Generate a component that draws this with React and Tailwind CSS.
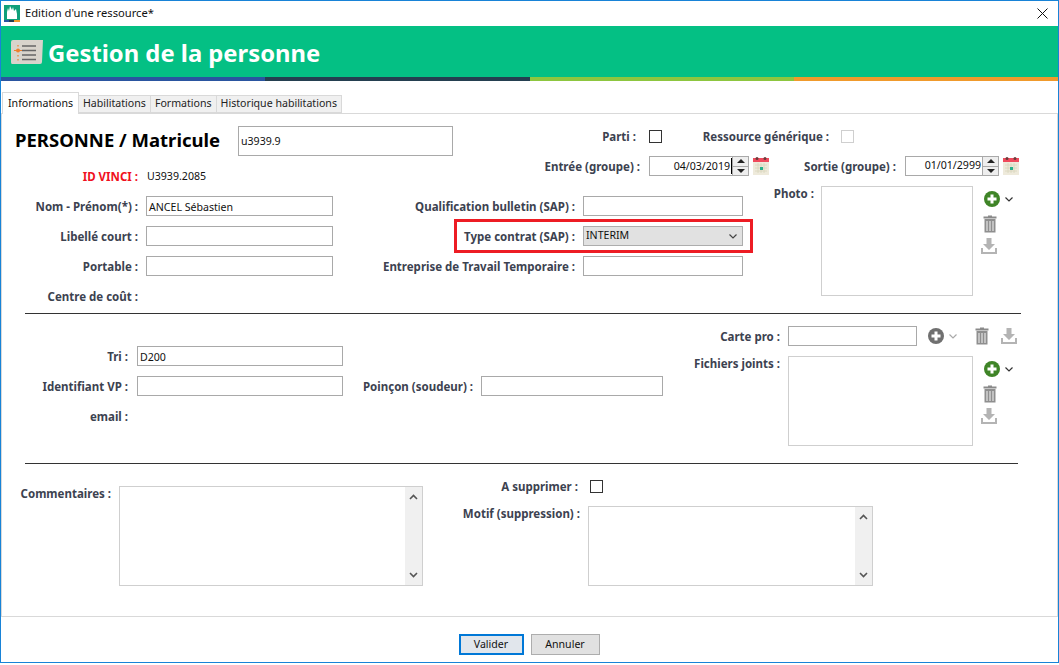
import React from 'react';

const PlusIcon = ({ color = '#3f8427' }) => (
  <svg width="16" height="16" viewBox="0 0 16 16">
    <circle cx="8" cy="8" r="8" fill={color} />
    <path d="M8 3.500v9M3.500 8h9" stroke="#fff" strokeWidth="3" />
  </svg>
);

const TrashIcon = () => (
  <svg width="14" height="18" viewBox="0 0 14 18">
    <path d="M5 0.500h4v1h4.500v2h-13v-2h4.500z" fill="#8a8a8a" />
    <path d="M1.500 4h11v13.500h-11z" fill="#8f8f8f" />
    <path d="M4 6v10M7 6v10M10 6v10" stroke="#e4e4e4" strokeWidth="1.200" />
  </svg>
);

const DownloadIcon = () => (
  <svg width="16" height="16" viewBox="0 0 16 16">
    <path d="M5.500 0h5v6h3.500l-6 6-6-6h3.500z" fill="#b4b4b4" />
    <path d="M0 10h2v4h12v-4h2v6h-16z" fill="#b4b4b4" />
  </svg>
);

const Chevron = ({ color = '#333' }) => (
  <svg width="8" height="5" viewBox="0 0 8 5">
    <path d="M0.500 0.500l3.500 3.500 3.500-3.500" fill="none" stroke={color} strokeWidth="1.200" />
  </svg>
);

const CalendarIcon = () => (
  <svg width="16" height="18" viewBox="0 0 16 18">
    <path d="M0 2h16v16h-16z" fill="#eeeadb" />
    <path d="M0 1h16v4h-16z" fill="#ef4a5c" />
    <circle cx="4" cy="1.500" r="1.500" fill="#6b3a3a" />
    <circle cx="12" cy="1.500" r="1.500" fill="#6b3a3a" />
    <path d="M2 8h12M2 11h12M2 14h12M5 6v10M8 6v10M11 6v10" stroke="#d8d5bd" strokeWidth="0.800" />
    <path d="M7 10h3v3h-3z" fill="#27b08a" />
  </svg>
);

const ListIcon = () => (
  <svg width="32" height="24" viewBox="0 0 32 24">
    <path d="M2 0h30l-1 22q0 2-2 2h-28q-1 0-1-2v-20q0-2 2-2z" fill="#d8d4cc" />
    <path d="M11 6h14M11 10.500h14M11 15h14M11 19.500h14" stroke="#666" strokeWidth="1.400" />
    <circle cx="7" cy="10.500" r="2" fill="#ee7f2d" />
    <path d="M3 10.500h8M7 5v1.500M7 15v1.500M7 19v1.500" stroke="#ee7f2d" strokeWidth="1.200" />
  </svg>
);

const AppIcon = () => (
  <svg width="16" height="17" viewBox="0 0 16 17">
    <path d="M0 0h16v15h-16z" fill="#0fa07a" />
    <path d="M3 14v-7l1-4 1 3 1-5 2 4 1-3 1 4 2-2 1 5v5z" fill="#fff" />
    <path d="M0 15h5v2h-5z" fill="#2a55a0" />
    <path d="M5 15h5v2h-5z" fill="#243f50" />
    <path d="M10 15h6v2h-6z" fill="#f09a2c" />
  </svg>
);

// libellé gras aligné à droite
const Label = ({ children, width, className = 'text-[#3c4250]' }) => (
  <div className={`flex h-5 shrink-0 justify-end whitespace-nowrap text-[11.5px] leading-[22px] font-bold ${width} ${className}`}>
    {children}
  </div>
);

const TextField = ({ value = '', className = '' }) => (
  <div className={`h-5 border border-[#a9a9a9] bg-white px-[2px] text-[10.6px] leading-[20px] text-[#111] ${className}`}>
    {value}
  </div>
);

const Checkbox = ({ disabled }) => (
  <div className={`h-[13px] w-[13px] shrink-0 border ${disabled ? 'border-[#cfcfcf]' : 'border-[#333]'} bg-white`} />
);

const DateField = ({ value, caret, width }) => (
  <div className="flex items-center">
    <div className={`flex h-5 items-center border border-[#a9a9a9] bg-white ${width}`}>
      <div className={`flex-1 pr-px text-right text-[10.6px] text-[#111] ${caret ? 'border-r border-black leading-4' : ''}`}>{value}</div>
      <div className="flex w-[16px] flex-col items-center self-stretch border-l border-[#a9a9a9] bg-[#eeeeee] text-[#222]">
        <div className="flex flex-1 items-center justify-center self-stretch border-b border-[#a9a9a9]">
          <div className="h-0 w-0 border-x-[4px] border-b-[4px] border-x-transparent border-b-[#222]" />
        </div>
        <div className="flex flex-1 items-center justify-center">
          <div className="h-0 w-0 border-x-[4px] border-t-[4px] border-x-transparent border-t-[#222]" />
        </div>
      </div>
    </div>
    <div className="ml-[4px]">
      <CalendarIcon />
    </div>
  </div>
);

const FileActions = () => (
  <div className="ml-[10px] flex flex-col pt-[5px]">
    <div className="flex items-center gap-[5px] pl-px">
      <PlusIcon />
      <Chevron />
    </div>
    <div className="mt-[8px]">
      <TrashIcon />
    </div>
    <div className="mt-[5px] -ml-[2px]">
      <DownloadIcon />
    </div>
  </div>
);

const ScrollArea = ({ className = '' }) => (
  <div className={`flex justify-end border border-[#cfcfcf] bg-white ${className}`}>
    <div className="flex w-[17px] flex-col items-center justify-between bg-[#f0f0f0] py-[7px]">
      <svg width="9" height="6" viewBox="0 0 9 6"><path d="M1 5l3.500-3.500 3.500 3.500" fill="none" stroke="#555" strokeWidth="1.600" /></svg>
      <svg width="9" height="6" viewBox="0 0 9 6"><path d="M1 1l3.500 3.500 3.500-3.500" fill="none" stroke="#555" strokeWidth="1.600" /></svg>
    </div>
  </div>
);

const Tab = ({ children, active }) => (
  <div
    className={
      active
        ? 'relative z-10 -mb-px flex h-[22px] items-center border border-b-0 border-[#d9d9d9] bg-white px-[5px] text-[10.6px] text-[#111]'
        : 'mt-[3px] flex h-[18px] items-center border border-l-0 border-[#d9d9d9] bg-[#f0f0f0] px-[4px] text-[10.6px] text-[#222]'
    }
  >
    {children}
  </div>
);

export default function App() {
  return (
    <div className="flex h-[663px] w-[1059px] flex-col border border-[#1883d7] bg-white font-['Noto_Sans',sans-serif]">
      {/* barre de titre */}
      <div className="flex h-[25px] shrink-0 items-center justify-between pl-[3px] pr-[10px]">
        <div className="flex items-center gap-[5px]">
          <AppIcon />
          <span className="text-[11.2px] text-[#111]">Edition d'une ressource*</span>
        </div>
        <svg width="11" height="11" viewBox="0 0 11 11"><path d="M0.500 0.500l10 10M10.500 0.500l-10 10" stroke="#111" strokeWidth="1" /></svg>
      </div>

      {/* bandeau */}
      <div className="flex h-[51px] shrink-0 items-center gap-[5px] bg-[#04c084] pl-[10px]">
        <ListIcon />
        <span className="pt-[5px] text-[23.8px] font-bold text-white">Gestion de la personne</span>
      </div>
      <div className="flex h-[4px] shrink-0">
        <div className="flex-1 bg-[#2a55a0]" />
        <div className="flex-1 bg-[#243f50]" />
        <div className="flex-1 bg-[#8dc63f]" />
        <div className="flex-1 bg-[#f09a2c]" />
      </div>

      {/* onglets */}
      <div className="mt-[11px] flex shrink-0 pl-px">
        <Tab active>Informations</Tab>
        <Tab>Habilitations</Tab>
        <Tab>Formations</Tab>
        <Tab>Historique habilitations</Tab>
      </div>

      <div className="flex flex-1 flex-col border-y border-[#d9d9d9] shadow-[inset_1px_0_0_#d9d9d9,inset_-1px_0_0_#d9d9d9]">
        {/* identité */}
        <div className="mt-[12px] flex h-[60px] shrink-0">
          <div className="w-[519px] shrink-0">
            <div className="flex h-[30px] items-center">
              <div className="w-[237px] shrink-0 pb-[2px] pl-[14px] text-[18.5px] font-bold text-black">PERSONNE / Matricule</div>
              <div className="h-[30px] w-[215px] border border-[#a9a9a9] px-[2px] text-[10.6px] leading-[28px] text-[#111]">u3939.9</div>
            </div>
            <div className="mt-[10px] flex">
              <Label width="w-[137px]" className="text-[#f01020]">ID VINCI :</Label>
              <div className="ml-[9px] text-[10.6px] leading-5 text-[#111]">U3939.2085</div>
            </div>
          </div>
          <div>
            <div className="flex h-5 items-center">
              <Label width="w-[116px]">Parti :</Label>
              <div className="ml-[13px]"><Checkbox /></div>
              <Label width="w-[167px]">Ressource générique :</Label>
              <div className="ml-[12px]"><Checkbox disabled /></div>
            </div>
            <div className="mt-[10px] flex">
              <Label width="w-[120px]">Entrée (groupe) :</Label>
              <div className="ml-[9px]"><DateField value="04/03/2019" width="w-[100px]" caret /></div>
              <Label width="w-[127px]">Sortie (groupe) :</Label>
              <div className="ml-[9px]"><DateField value="01/01/2999" width="w-[94px]" /></div>
            </div>
          </div>
        </div>

        {/* coordonnées, contrat, photo */}
        <div className="flex h-[127px] shrink-0">
          <div className="flex w-[382px] shrink-0 flex-col gap-[10px] pt-[10px]">
            <div className="flex">
              <Label width="w-[137px]">Nom - Prénom(*) :</Label>
              <TextField value="ANCEL Sébastien" className="ml-[8px] w-[187px]" />
            </div>
            <div className="flex">
              <Label width="w-[137px]">Libellé court :</Label>
              <TextField className="ml-[8px] w-[187px]" />
            </div>
            <div className="flex">
              <Label width="w-[137px]">Portable :</Label>
              <TextField className="ml-[8px] w-[187px]" />
            </div>
            <div className="flex">
              <Label width="w-[137px]">Centre de coût :</Label>
            </div>
          </div>
          <div className="flex w-[390px] shrink-0 flex-col gap-[10px] pt-[10px]">
            <div className="flex">
              <Label width="w-[192px]">Qualification bulletin (SAP) :</Label>
              <TextField className="ml-[8px] w-[160px]" />
            </div>
            <div className="relative flex">
              <Label width="w-[192px]">Type contrat (SAP) :</Label>
              <div className="ml-[8px] flex h-5 w-[160px] items-center justify-between border border-[#adadad] bg-[#e1e1e1] pl-[2px] pr-[5px] text-[10.6px] text-[#111]">
                INTERIM
                <Chevron color="#444" />
              </div>
              <div className="absolute left-[71px] top-[-7px] h-[34px] w-[299px] border-[3px] border-[#ed1c24]" />
            </div>
            <div className="flex">
              <Label width="w-[192px]">Entreprise de Travail Temporaire :</Label>
              <TextField className="ml-[8px] w-[160px]" />
            </div>
          </div>
          <div className="-mt-[3px] w-[41px] shrink-0">
            <Label width="w-[41px]">Photo :</Label>
          </div>
          <div className="ml-[7px] h-[110px] w-[152px] border border-[#cfcfcf]" />
          <FileActions />
        </div>

        <div className="ml-[24px] h-px w-[996px] shrink-0 bg-[#333]" />

        {/* tri, VP, pièces jointes */}
        <div className="flex h-[149px] shrink-0">
          <div className="flex w-[672px] shrink-0 flex-col gap-[10px] pt-[32px]">
            <div className="flex">
              <Label width="w-[127px]">Tri :</Label>
              <TextField value="D200" className="ml-[9px] w-[206px]" />
            </div>
            <div className="flex">
              <Label width="w-[127px]">Identifiant VP :</Label>
              <TextField className="ml-[9px] w-[206px]" />
              <Label width="w-[130px]">Poinçon (soudeur) :</Label>
              <TextField className="ml-[8px] w-[182px]" />
            </div>
            <div className="flex">
              <Label width="w-[127px]">email :</Label>
            </div>
          </div>
          <div className="flex flex-col pt-[12px]">
            <div className="flex h-5 items-center">
              <Label width="w-[107px]">Carte pro :</Label>
              <TextField className="ml-[8px] w-[129px]" />
              <div className="ml-[11px] flex items-center gap-[5px]">
                <PlusIcon color="#707070" />
                <Chevron color="#aaa" />
              </div>
              <div className="ml-[18px]"><TrashIcon /></div>
              <div className="ml-[12px]"><DownloadIcon /></div>
            </div>
            <div className="mt-[10px] flex">
              <div className="-mt-[3px] w-[107px] shrink-0">
                <Label width="w-[107px]">Fichiers joints :</Label>
              </div>
              <div className="ml-[8px] h-[90px] w-[185px] border border-[#cfcfcf]" />
              <FileActions />
            </div>
          </div>
        </div>

        <div className="ml-[24px] h-px w-[993px] shrink-0 bg-[#333]" />

        {/* commentaires */}
        <div className="flex flex-1 pt-[12px]">
          <div className="flex w-[449px] shrink-0 pt-[10px]">
            <div className="-mt-[3px] w-[110px] shrink-0">
              <Label width="w-[110px]">Commentaires :</Label>
            </div>
            <ScrollArea className="ml-[8px] h-[100px] w-[304px]" />
          </div>
          <div>
            <div className="flex h-5 items-center">
              <Label width="w-[128px]">A supprimer :</Label>
              <div className="ml-[12px]"><Checkbox /></div>
            </div>
            <div className="mt-[10px] flex">
              <div className="-mt-[3px] w-[130px] shrink-0">
                <Label width="w-[130px]">Motif (suppression) :</Label>
              </div>
              <ScrollArea className="ml-[8px] h-[80px] w-[285px]" />
            </div>
          </div>
        </div>
      </div>

      {/* boutons */}
      <div className="flex h-[45px] shrink-0 items-start justify-center gap-[7px] pt-[17px] pr-[1px]">
        <button className="h-[21px] w-[65px] border-2 border-[#0078d7] bg-[#e1e6ec] text-[10.6px] text-[#111]">Valider</button>
        <button className="h-[21px] w-[69px] border border-[#adadad] bg-[#e1e1e1] text-[10.6px] text-[#111]">Annuler</button>
      </div>
    </div>
  );
}
